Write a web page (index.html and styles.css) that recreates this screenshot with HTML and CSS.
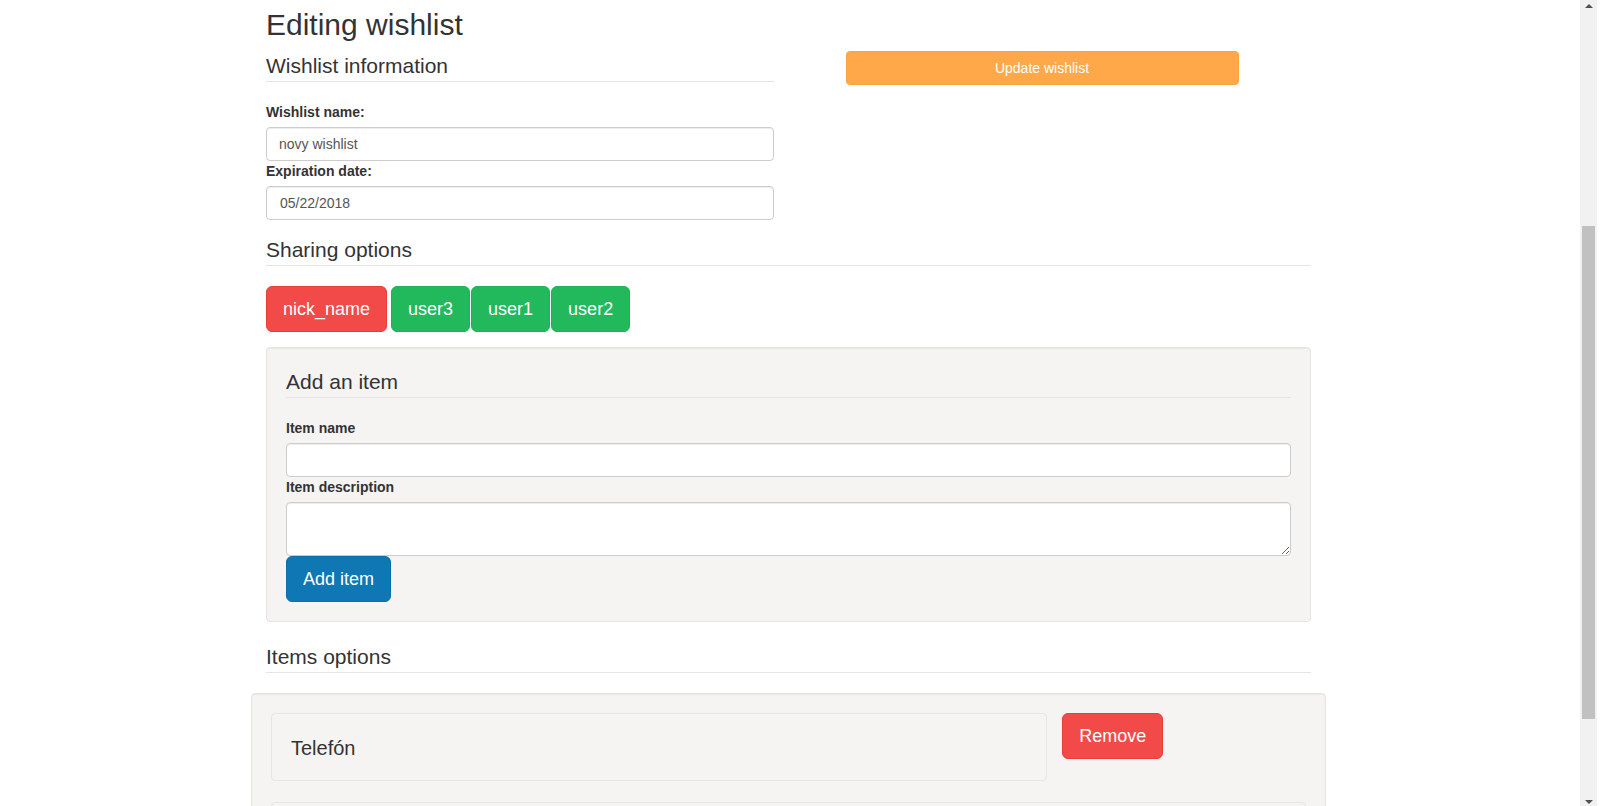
FILE: index.html
```html
<!DOCTYPE html>
<html lang="en">
<head>
  <meta charset="UTF-8">
  <meta name="viewport" content="width=device-width, initial-scale=1.0">
  <title>Editing wishlist</title>
  <link rel="stylesheet" href="styles.css">
</head>
<body>
  <div class="page">
    <main class="main">
      <div class="container">
        <h2 class="page-title">Editing wishlist</h2>

        <div class="top-row">
          <div class="col-half">
            <h3 class="section-title">Wishlist information</h3>
            <label class="field-label" for="wishlist-name">Wishlist name:</label>
            <input class="form-control" id="wishlist-name" type="text" value="novy wishlist">
            <label class="field-label" for="expiration">Expiration date:</label>
            <input class="form-control date-control" id="expiration" type="text" value="05/22/2018">
          </div>
          <div class="col-half">
            <button class="btn btn-warning btn-update">Update wishlist</button>
          </div>
        </div>

        <div class="sharing">
          <h3 class="section-title">Sharing options</h3>
          <div class="share-list">
            <button class="btn btn-lg btn-danger owner">nick_name</button>
            <button class="btn btn-lg btn-success">user3</button>
            <button class="btn btn-lg btn-success">user1</button>
            <button class="btn btn-lg btn-success">user2</button>
          </div>
        </div>

        <div class="well add-item">
          <h3 class="section-title">Add an item</h3>
          <label class="field-label" for="item-name">Item name</label>
          <input class="form-control" id="item-name" type="text">
          <label class="field-label" for="item-description">Item description</label>
          <textarea class="form-control" id="item-description" rows="2"></textarea>
          <button class="btn btn-lg btn-primary">Add item</button>
        </div>

        <h3 class="section-title">Items options</h3>
        <div class="well items-well">
          <div class="item-row">
            <div class="item-card">Telefón</div>
            <button class="btn btn-lg btn-danger remove-button">Remove</button>
          </div>
          <div class="item-card item-card-wide"></div>
        </div>
      </div>
    </main>

    <div class="scrollbar">
      <div class="scroll-arrow"><span class="arrow-up"></span></div>
      <div class="scroll-track"><div class="scroll-thumb"></div></div>
      <div class="scroll-arrow"><span class="arrow-down"></span></div>
    </div>
  </div>
</body>
</html>
```

FILE: styles.css
```css
* {
  box-sizing: border-box;
}

html, body {
  margin: 0;
  height: 100%;
  overflow: hidden;
}

body {
  font-family: "Liberation Sans", Arial, sans-serif;
  font-size: 14px;
  line-height: 20px;
  color: #333;
  background-color: #fff;
}

.page {
  display: flex;
  height: 100vh;
}

.main {
  flex: 1;
  padding-right: 3px;
  overflow: hidden;
}

.container {
  width: 1045px;
  margin: 0 auto;
}

.page-title {
  font-size: 30px;
  line-height: 33px;
  font-weight: normal;
  margin: 8px 0 10px;
}

.section-title {
  font-size: 21px;
  line-height: 30px;
  font-weight: normal;
  margin: 0 0 20px;
  border-bottom: 1px solid #e5e5e5;
}

.top-row {
  display: flex;
  margin: 0 -15px;
}

.col-half {
  width: 50%;
  padding: 0 15px;
}

.field-label {
  display: block;
  font-weight: bold;
  margin-bottom: 5px;
}

.form-control {
  display: block;
  width: 100%;
  height: 34px;
  padding: 6px 12px;
  font-family: inherit;
  font-size: 14px;
  line-height: 20px;
  color: #555;
  background-color: #fff;
  border: 1px solid #ccc;
  border-radius: 4px;
  box-shadow: inset 0 1px 1px rgba(0, 0, 0, 0.075);
  margin: 0;
}

.date-control {
  padding-left: 13px;
}

textarea.form-control {
  height: 54px;
  resize: vertical;
}

.btn {
  display: inline-block;
  padding: 6px 12px;
  font-family: inherit;
  font-size: 14px;
  line-height: 20px;
  color: #fff;
  border: 1px solid transparent;
  border-radius: 4px;
  cursor: pointer;
  margin: 0;
}

.btn-lg {
  padding: 10px 16px;
  font-size: 18px;
  line-height: 24px;
  border-radius: 6px;
}

.btn-warning {
  background-color: #fea84a;
  border-color: #f9a33f;
}

.btn-danger {
  background-color: #f14a48;
  border-color: #ea3c3a;
}

.btn-success {
  background-color: #22b95c;
  border-color: #1eb155;
}

.btn-primary {
  background-color: #0f77b4;
  border-color: #0c6ea8;
}

.btn-update {
  width: 393px;
  margin-left: 42px;
}

.sharing {
  margin-top: 15px;
}

.share-list {
  display: flex;
  gap: 1px;
  margin-bottom: 15px;
}

.share-list .owner {
  margin-right: 3px;
}

.well {
  background-color: #f5f4f2;
  border: 1px solid #e6e4e1;
  border-radius: 4px;
  padding: 19px;
  box-shadow: inset 0 1px 1px rgba(0, 0, 0, 0.05);
}

.add-item {
  margin-bottom: 20px;
}

.items-well {
  margin: 0 -15px;
}

.item-row {
  display: flex;
  align-items: flex-start;
  margin-bottom: 21px;
}

.item-card {
  width: 75%;
  min-height: 68px;
  padding: 20px 19px 18px;
  font-size: 20px;
  line-height: 28px;
  background-color: #f5f4f2;
  border: 1px solid #e8e6e3;
  border-radius: 4px;
}

.item-card-wide {
  width: 100%;
}

.remove-button {
  margin-left: 15px;
}

.scrollbar {
  width: 17px;
  margin-right: 3px;
  display: flex;
  flex-direction: column;
  background-color: #f1f1f1;
}

.scroll-arrow {
  height: 17px;
  display: flex;
  justify-content: center;
}

.arrow-up {
  margin-top: 4px;
  width: 0;
  height: 0;
  border-left: 4px solid transparent;
  border-right: 4px solid transparent;
  border-bottom: 4px solid #505050;
}

.arrow-down {
  margin-top: 11px;
  width: 0;
  height: 0;
  border-left: 4px solid transparent;
  border-right: 4px solid transparent;
  border-top: 4px solid #505050;
}

.scroll-track {
  flex: 1;
}

.scroll-thumb {
  margin: 209px 2px 0;
  height: 493px;
  background-color: #c1c1c1;
}
```
